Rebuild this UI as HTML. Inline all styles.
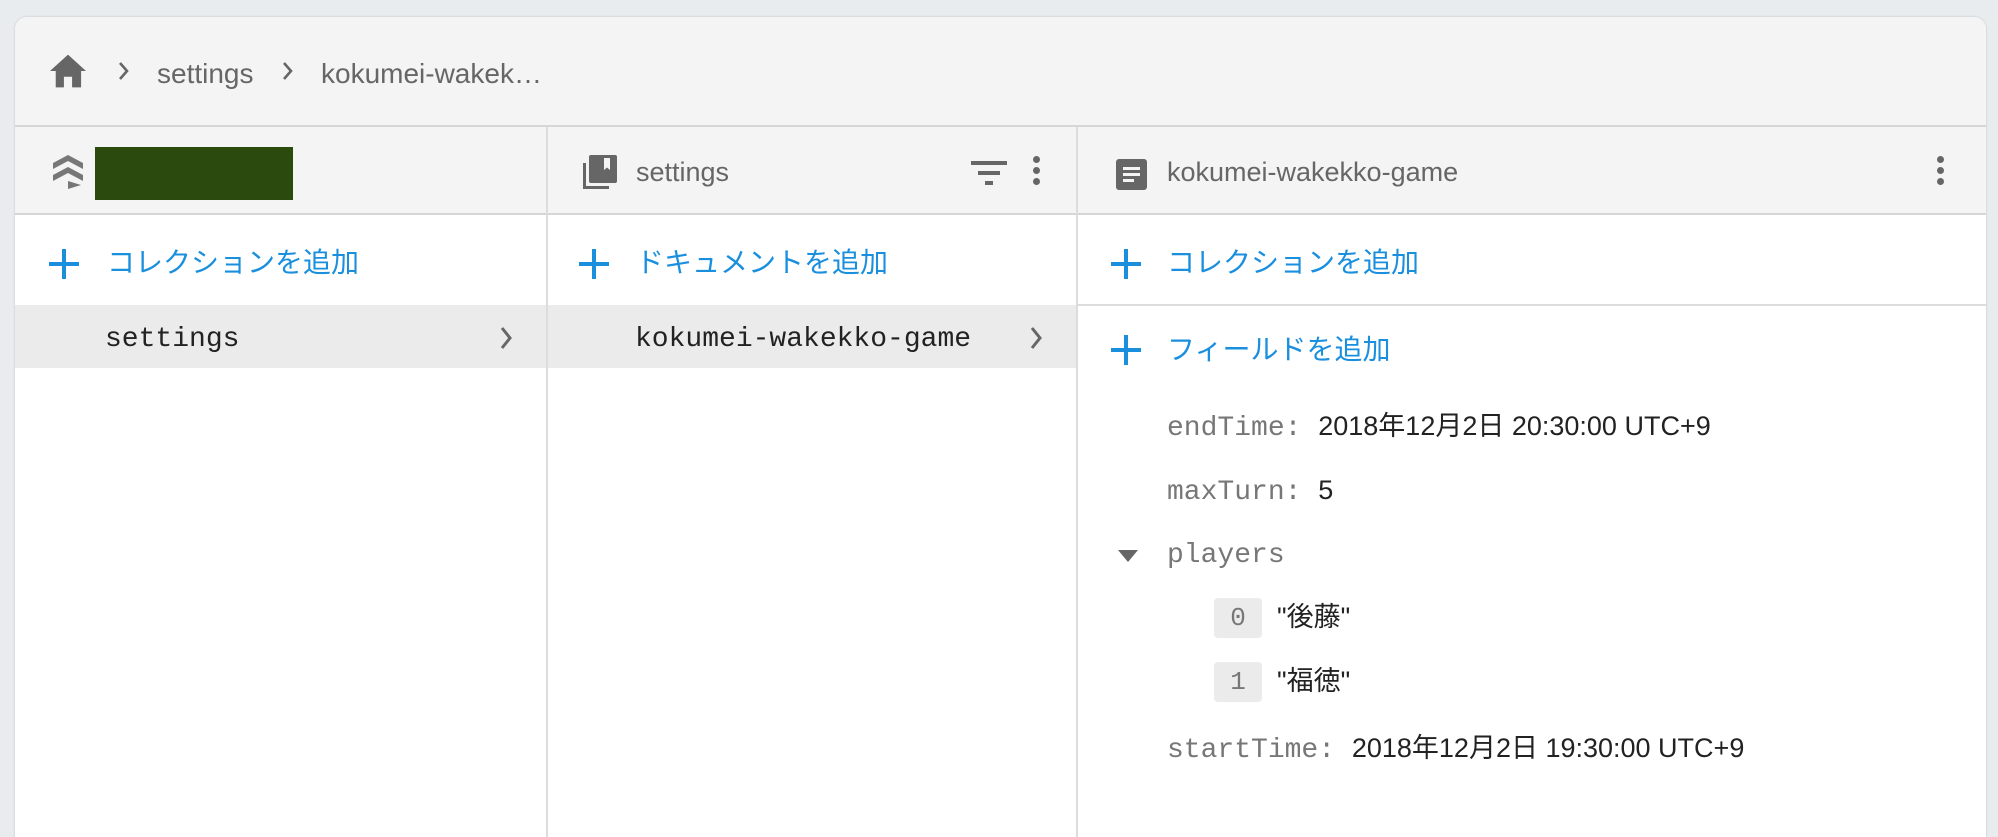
<!DOCTYPE html>
<html><head><meta charset="utf-8"><style>
*{margin:0;padding:0;box-sizing:border-box}
body{width:1998px;height:820px;background:#e9ecef;overflow:hidden;font-family:"Liberation Sans","Noto Sans CJK JP",sans-serif;position:relative}
.card{position:absolute;left:15px;top:17px;width:1971px;height:820px;background:#fff;border-radius:12px 12px 0 0;overflow:hidden;box-shadow:0 0 2px rgba(0,0,0,.2)}
.a{position:absolute}
.hdr{left:0;top:0;width:100%;height:110px;background:#f4f4f4;border-bottom:2px solid #d6d6d6}
.ch{top:110px;height:88px;background:#f4f4f4;border-bottom:2px solid #d6d6d6}
.vd{top:110px;width:2px;height:720px;background:#dcdcdc}
.t{position:absolute;white-space:nowrap;line-height:1}
.g{color:#666;font-size:27px}
.blue{color:#1a8fde;font-size:28px;font-family:"Liberation Sans","Noto Sans CJK JP",sans-serif}
.mono{font-family:"Liberation Mono",monospace;font-size:28px;letter-spacing:0}
.plus{position:absolute;width:30px;height:30px}
.plus:before{content:"";position:absolute;left:13px;top:0;width:4px;height:30px;background:#1a8fde}
.plus:after{content:"";position:absolute;left:0;top:13px;width:30px;height:4px;background:#1a8fde}
.dots{position:absolute;width:8px}
.dots i{display:block;width:7px;height:7px;border-radius:50%;background:#666;margin-bottom:4px}
.val{color:#222;font-size:27px}
.idx{position:absolute;width:48px;height:40px;background:#ebebeb;border-radius:4px;color:#777;font-family:"Liberation Mono",monospace;font-size:26px;text-align:center;line-height:40px}
</style></head><body>
<div class="card">
<div class="a hdr"></div>
<svg class="a" style="left:33px;top:36px" width="40" height="36" viewBox="0 0 24 22"><path d="M9.5 21V14.5h5V21h5.5V11h3L12 1 1 11h3.5v10z" fill="#666"/></svg>
<svg class="a" style="left:102px;top:43px" width="14" height="22" viewBox="0 0 14 22"><path d="M3 3l7 8-7 8" stroke="#666" stroke-width="2.6" fill="none"/></svg>
<div class="t g" style="left:142px;top:43px;font-size:28px">settings</div>
<svg class="a" style="left:266px;top:43px" width="14" height="22" viewBox="0 0 14 22"><path d="M3 3l7 8-7 8" stroke="#666" stroke-width="2.6" fill="none"/></svg>
<div class="t g" style="left:306px;top:43px;font-size:28px">kokumei-wakek…</div>

<div class="a ch" style="left:0;width:100%"></div>
<div class="a vd" style="left:531px"></div>
<div class="a vd" style="left:1061px"></div>

<svg class="a" style="left:38px;top:138px" width="30" height="34" viewBox="0 0 30 34"><path d="M0 8L15 0 30 8v6L15 6 0 14z M0 20L15 12 30 20v6L15 18 0 26z M15 26L28 30 15 34z" fill="#777"/></svg>
<div class="a" style="left:80px;top:130px;width:198px;height:53px;background:#2a4a0e"></div>
<svg class="a" style="left:568px;top:138px" width="34" height="34" viewBox="0 0 34 34"><path d="M0 8h3v23h23v3H0z" fill="#666"/><rect x="6" y="0" width="28" height="28" rx="2" fill="#666"/><path d="M21 3h6v12l-3-2.5-3 2.5z" fill="#f4f4f4"/></svg>
<div class="t g" style="left:621px;top:142px">settings</div>
<svg class="a" style="left:956px;top:142px" width="36" height="28" viewBox="0 0 36 28"><rect x="0" y="2" width="36" height="4" fill="#666"/><rect x="7" y="12" width="22" height="4" fill="#666"/><rect x="14" y="22" width="8" height="4" fill="#666"/></svg>
<div class="dots" style="left:1018px;top:139px"><i></i><i></i><i></i></div>
<svg class="a" style="left:1101px;top:142px" width="31" height="31" viewBox="0 0 31 31"><rect width="31" height="31" rx="3" fill="#666"/><rect x="7" y="8" width="17" height="3" fill="#f4f4f4"/><rect x="7" y="14" width="17" height="3" fill="#f4f4f4"/><rect x="7" y="20" width="11" height="3" fill="#f4f4f4"/></svg>
<div class="t g" style="left:1152px;top:142px">kokumei-wakekko-game</div>
<div class="dots" style="left:1922px;top:139px"><i></i><i></i><i></i></div>

<div class="plus" style="left:34px;top:232px"></div>
<div class="t blue" style="left:92px;top:232px">コレクションを追加</div>
<div class="plus" style="left:564px;top:232px"></div>
<div class="t blue" style="left:621px;top:232px">ドキュメントを追加</div>
<div class="plus" style="left:1096px;top:232px"></div>
<div class="t blue" style="left:1152px;top:232px">コレクションを追加</div>
<div class="a" style="left:1063px;top:287px;width:908px;height:2px;background:#dcdcdc"></div>

<div class="a" style="left:0;top:288px;width:531px;height:63px;background:#ebebeb"></div>
<div class="a" style="left:533px;top:288px;width:528px;height:63px;background:#ebebeb"></div>
<div class="t mono" style="left:90px;top:309px;color:#222">settings</div>
<svg class="a" style="left:483px;top:308px" width="16" height="26" viewBox="0 0 16 26"><path d="M4 3l8 10-8 10" stroke="#666" stroke-width="3" fill="none"/></svg>
<div class="t mono" style="left:620px;top:309px;color:#222">kokumei-wakekko-game</div>
<svg class="a" style="left:1013px;top:308px" width="16" height="26" viewBox="0 0 16 26"><path d="M4 3l8 10-8 10" stroke="#666" stroke-width="3" fill="none"/></svg>

<div class="plus" style="left:1096px;top:318px"></div>
<div class="t blue" style="left:1152px;top:319px">フィールドを追加</div>
<div class="t" style="left:1152px;top:396px"><span class="mono" style="color:#777">endTime: </span><span class="val">2018年12月2日 20:30:00 UTC+9</span></div>
<div class="t" style="left:1152px;top:460px"><span class="mono" style="color:#777">maxTurn: </span><span class="val">5</span></div>
<svg class="a" style="left:1103px;top:533px" width="20" height="12" viewBox="0 0 20 12"><path d="M0 0h20L10 12z" fill="#666"/></svg>
<div class="t mono" style="left:1152px;top:525px;color:#777">players</div>
<div class="idx" style="left:1199px;top:581px">0</div>
<div class="t val" style="left:1262px;top:587px">"後藤"</div>
<div class="idx" style="left:1199px;top:645px">1</div>
<div class="t val" style="left:1262px;top:651px">"福徳"</div>
<div class="t" style="left:1152px;top:718px"><span class="mono" style="color:#777">startTime: </span><span class="val">2018年12月2日 19:30:00 UTC+9</span></div>
</div>
</body></html>
